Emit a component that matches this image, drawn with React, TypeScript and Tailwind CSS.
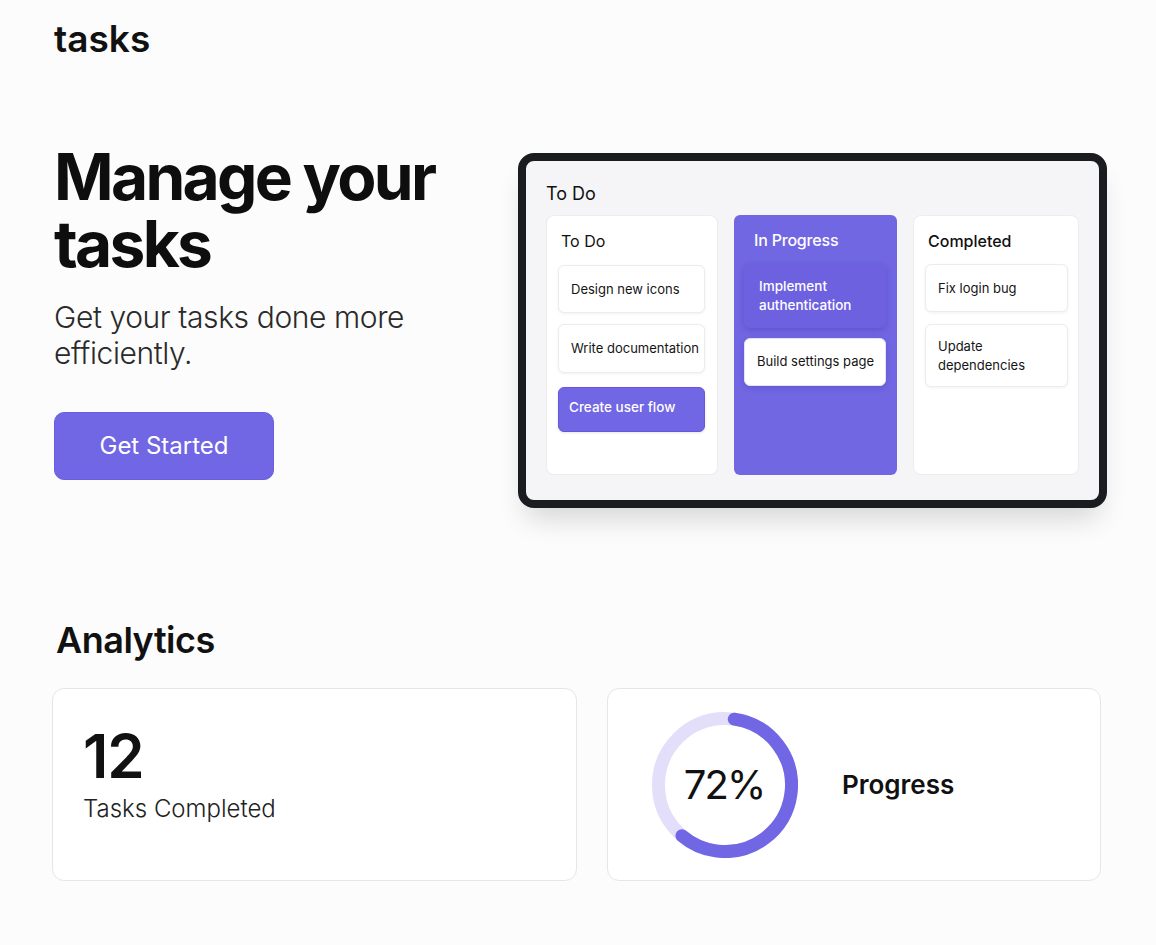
import React from "react";

function Ring() {
  const r = 66.5;
  const c = 2 * Math.PI * r;
  const frac = 212 / 360;
  return (
    <svg width="146" height="146" viewBox="0 0 146 146" className="block">
      <circle cx="73" cy="73" r={r} fill="none" stroke="#e3dffb" strokeWidth="13" />
      <circle
        cx="73"
        cy="73"
        r={r}
        fill="none"
        stroke="#7166e3"
        strokeWidth="13"
        strokeLinecap="round"
        strokeDasharray={`${c * frac} ${c}`}
        transform="rotate(-82 73 73)"
      />
    </svg>
  );
}

function Card({
  children,
  className = "",
}: {
  children: React.ReactNode;
  className?: string;
}) {
  return (
    <div
      className={`flex items-center whitespace-nowrap rounded-[6px] border border-[#ececec] bg-white pl-[12px] pr-[2px] text-[13px] leading-[19px] text-[#151515] shadow-[0_1px_3px_rgba(0,0,0,0.06)] ${className}`}
    >
      {children}
    </div>
  );
}

export default function App() {
  return (
    <div className="min-h-screen bg-[#fcfcfc] px-[52px] pb-[60px] font-['Inter','Noto_Sans',sans-serif] text-[#111111]">
      <div className="pt-[21px] pl-[2px] text-[37px] leading-[36px] font-semibold tracking-[0px]">
        tasks
      </div>

      <div className="mt-[86px] flex items-start">
        <div className="w-[466px] shrink-0 pl-[2px]">
          <h1 className="text-[64px] leading-[67px] font-bold tracking-[-2.7px] text-[#0e0e0e]">
            Manage your
            <br />
            tasks
          </h1>
          <p className="mt-[22px] text-[30px] leading-[36px] font-light tracking-[-0.4px] text-[#2a2a2a]">
            Get your tasks done more
            <br />
            efficiently.
          </p>
          <button className="mt-[41px] flex h-[68px] w-[220px] items-center justify-center rounded-[10px] border border-[#6a5ee0] bg-[#7166e3] text-[24px] font-normal text-white">
            Get Started
          </button>
        </div>

        <div className="mt-[10px] h-[355px] w-[589px] shrink-0 rounded-[16px] border-[8px] border-[#1b1c20] bg-[#f5f5f7] px-[20px] pt-[22px] shadow-[0_18px_28px_-8px_rgba(0,0,0,0.16)]">
          <div className="text-[18px] leading-[22px] text-[#111]">To Do</div>
          <div className="mt-[10px] grid h-[260px] grid-cols-[172px_163px_166px] gap-x-[16px]">
            {/* To Do column */}
            <div className="rounded-[8px] border border-[#ececec] bg-white pt-[15px] pl-[11px] pr-[12px]">
              <div className="pl-[3px] text-[16px] leading-[20px] text-[#111]">To Do</div>
              <Card className="mt-[14px] h-[48px]">Design new icons</Card>
              <Card className="mt-[11px] h-[49px]">Write documentation</Card>
              <div className="mt-[14px] flex h-[45px] items-center rounded-[6px] border border-[#6457dc] bg-[#7166e3] pl-[10px] pb-[4px] text-[13.5px] font-medium text-white shadow-[0_1px_3px_rgba(0,0,0,0.1)]">
                Create user flow
              </div>
            </div>

            {/* In Progress column */}
            <div className="rounded-[6px] bg-[#7267e3] pt-[15px] pl-[10px] pr-[11px]">
              <div className="pl-[10px] text-[16px] leading-[20px] font-medium tracking-[-0.2px] text-white">
                In Progress
              </div>
              <div className="mt-[14px] flex h-[64px] items-center rounded-[6px] bg-[#6d61df] pl-[15px] text-[13.5px] leading-[19px] font-medium text-white shadow-[0_2px_6px_rgba(40,20,140,0.25)]">
                <span>
                  Implement
                  <br />
                  authentication
                </span>
              </div>
              <div className="mt-[10px] flex h-[48px] items-center whitespace-nowrap rounded-[6px] border border-[#e4e2fa] bg-white pl-[12px] text-[13px] text-[#151515] shadow-[0_2px_6px_rgba(40,20,140,0.2)]">
                Build settings page
              </div>
            </div>

            {/* Completed column */}
            <div className="rounded-[8px] border border-[#ececec] bg-white pt-[15px] pl-[11px] pr-[10px]">
              <div className="pl-[3px] text-[16px] leading-[20px] font-medium text-[#111]">
                Completed
              </div>
              <Card className="mt-[13px] h-[48px]">Fix login bug</Card>
              <Card className="mt-[12px] h-[63px]">
                <span>
                  Update
                  <br />
                  dependencies
                </span>
              </Card>
            </div>
          </div>
        </div>
      </div>

      <h2 className="mt-[114px] ml-[4px] text-[36px] leading-[36px] font-semibold tracking-[-0.5px] text-[#111]">
        Analytics
      </h2>

      <div className="mt-[30px] grid grid-cols-[525px_494px] gap-x-[30px]">
        <div className="h-[193px] rounded-[12px] border border-[#e6e6e6] bg-white pl-[30px] pt-[37px]">
          <div className="text-[60px] leading-[60px] font-semibold tracking-[-1px] text-[#111]">12</div>
          <div className="mt-[7px] text-[24px] leading-[32px] font-light text-[#222]">
            Tasks Completed
          </div>
        </div>
        <div className="flex h-[193px] items-center rounded-[12px] border border-[#e6e6e6] bg-white pl-[44px]">
          <div className="relative h-[146px] w-[146px]">
            <Ring />
            <div className="absolute inset-0 flex items-center justify-center pr-[2px] text-[40px] font-normal tracking-[-2px] text-[#111]">
              72%
            </div>
          </div>
          <div className="ml-[44px] text-[26px] font-semibold text-[#111]">Progress</div>
        </div>
      </div>
    </div>
  );
}
